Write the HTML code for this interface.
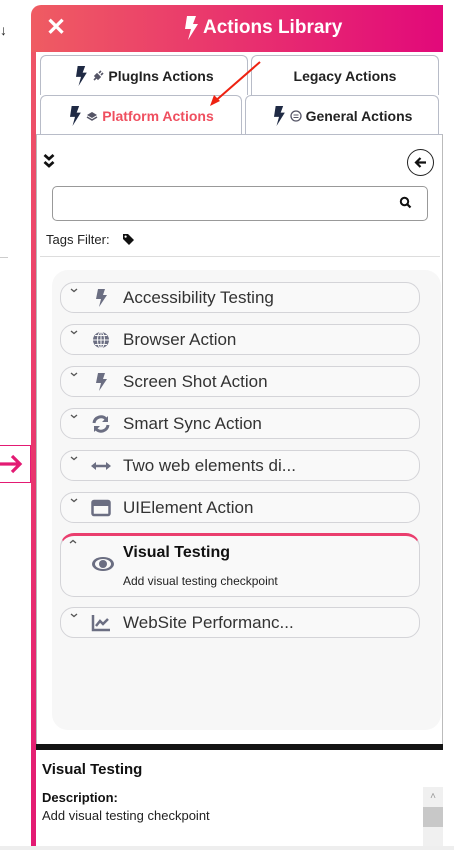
<!DOCTYPE html>
<html><head><style>
*{box-sizing:border-box;margin:0;padding:0}
body{width:454px;height:850px;background:#fff;font-family:"Liberation Sans",sans-serif;position:relative;overflow:hidden;color:#222}
.abs{position:absolute}
.hdr{left:31px;top:5px;width:412px;height:47px;background:linear-gradient(90deg,#ef5c62,#e2097a);border-radius:10px 0 0 0;color:#fff}
.lb{left:31px;top:40px;width:5px;height:806px;background:linear-gradient(180deg,#ee5667,#e31a73)}
.tab{background:#fff;border:1px solid #b8bcc8;border-bottom:none;border-radius:6px 6px 0 0;font-weight:bold;font-size:14px;display:flex;align-items:center;justify-content:center;gap:4px;color:#222}
.bolt{width:14px;height:20px}
.item{position:absolute;left:60px;width:360px;height:31px;border:1px solid #d4d4d8;border-radius:14px;background:#f9f9f9;font-size:17px;color:#333}
.item .ch{position:absolute;left:9px;top:5px}
.item .ic{position:absolute;left:30px;top:6px;width:20px;height:18px}
.item .tx{position:absolute;left:62px;top:5px}
</style></head><body>
<div class="abs" style="left:0;top:22px;font-size:14px">&#8595;</div>
<div class="abs" style="left:0;top:257px;width:8px;height:1px;background:#ccc"></div>
<div class="abs lb"></div>
<div class="abs hdr">
 <div class="abs" style="left:15px;top:8px;font-size:24px;font-weight:bold">✕</div>
 <svg class="abs" style="left:152px;top:11px" width="16" height="24" viewBox="0 0 16 24"><path d="M4 0h9l-3 8h5L5 24l3-11H2z" fill="#fff"/></svg>
 <div class="abs" style="left:172px;top:12px;font-size:19px;font-weight:bold">Actions Library</div>
</div>
<div class="abs" style="left:36px;top:52px;width:407px;height:82px;background:#fff"></div>
<div class="abs tab" style="left:40px;top:55px;width:208px;height:40px"><svg class="bolt" viewBox="0 0 16 24"><path d="M4 0h9l-3 8h5L5 24l3-11H2z" fill="#1f2a44"/></svg><svg width="12" height="12" viewBox="0 0 12 12"><path d="M2 10l3-3M5 4l3 3-2 2-3-3zM7 3l2-2M9 5l2-2" stroke="#556" stroke-width="1.6" fill="#556"/></svg>PlugIns Actions</div>
<div class="abs tab" style="left:251px;top:55px;width:188px;height:40px">Legacy Actions</div>
<div class="abs tab" style="left:40px;top:95px;width:202px;height:40px;color:#ef4f5f"><svg class="bolt" viewBox="0 0 16 24"><path d="M4 0h9l-3 8h5L5 24l3-11H2z" fill="#1f2a44"/></svg><svg width="12" height="12" viewBox="0 0 12 12"><path d="M6 2l5 3-5 3-5-3z" fill="#556"/><path d="M1 7l5 3 5-3" stroke="#556" stroke-width="1.5" fill="none"/></svg>Platform Actions</div>
<div class="abs tab" style="left:245px;top:95px;width:194px;height:40px"><svg class="bolt" viewBox="0 0 16 24"><path d="M4 0h9l-3 8h5L5 24l3-11H2z" fill="#1f2a44"/></svg><svg width="12" height="12" viewBox="0 0 12 12"><circle cx="6" cy="6" r="5" stroke="#556" stroke-width="1.3" fill="none"/><path d="M3.5 5h5M3.5 7.5h5" stroke="#556"/></svg>General Actions</div>
<svg class="abs" style="left:0;top:0" width="454" height="850"><path d="M260 62L213 103" stroke="#e21" stroke-width="2"/><path d="M210 106l4-11 6 6z" fill="#e21"/>
<path d="M428 507L327 556" stroke="#e21" stroke-width="2"/><path d="M320 559l8-10 4 7z" fill="#e21"/></svg>
<div class="abs" style="left:36px;top:134px;width:407px;height:612px;border:1px solid #bbb;border-top:1px solid #b8bcc8;background:#fff"></div>
<svg class="abs" style="left:43px;top:153px" width="12" height="16" viewBox="0 0 12 16"><path d="M1.5 2l4.5 4 4.5-4M1.5 9l4.5 4 4.5-4" stroke="#111" stroke-width="2.8" fill="none"/></svg>
<div class="abs" style="left:407px;top:149px;width:27px;height:27px;border:1.5px solid #222;border-radius:50%"></div>
<svg class="abs" style="left:413px;top:155px" width="15" height="15" viewBox="0 0 15 15"><path d="M13 7.5H3M7.5 3L3 7.5 7.5 12" stroke="#111" stroke-width="2.2" fill="none"/></svg>
<div class="abs" style="left:52px;top:186px;width:376px;height:35px;border:1px solid #999;border-radius:5px"></div>
<svg class="abs" style="left:399px;top:196px" width="13" height="13" viewBox="0 0 13 13"><circle cx="5.5" cy="5.5" r="3.7" stroke="#111" stroke-width="2" fill="none"/><path d="M8 8l3.5 3.5" stroke="#111" stroke-width="2.2"/></svg>
<div class="abs" style="left:46px;top:232px;font-size:13px">Tags Filter:</div>
<svg class="abs" style="left:122px;top:233px" width="13" height="13" viewBox="0 0 13 13"><path d="M1 1h5l6 6-5 5-6-6z" fill="#111"/><circle cx="3.6" cy="3.6" r="1.1" fill="#fff"/></svg>
<div class="abs" style="left:40px;top:256px;width:400px;height:1px;background:#ddd"></div>
<div class="abs" style="left:52px;top:270px;width:389px;height:460px;background:#f7f7f7;border-radius:16px"></div>
<svg width="0" height="0" style="position:absolute"><defs><symbol id="cv" viewBox="0 0 8 5"><path d="M1 1l3 2.5L7 1" stroke="#555" stroke-width="1.3" fill="none"/></symbol></defs></svg>
<div class="item" style="top:282px"><svg class="ch" width="8" height="5"><use href="#cv"/></svg><svg class="ic" viewBox="0 0 20 18"><path d="M7 0h7l-2 6h4L8 18l2-8H5z" fill="#6b6e82"/></svg><span class="tx">Accessibility Testing</span></div>
<div class="item" style="top:324px"><svg class="ch" width="8" height="5"><use href="#cv"/></svg><svg class="ic" viewBox="0 0 20 18"><circle cx="10" cy="9" r="8" fill="#6b6e82"/><path d="M2 9h16M10 1v16M4 4.5h12M4 13.5h12" stroke="#f9f9f9" stroke-width="1"/><ellipse cx="10" cy="9" rx="3.5" ry="8" stroke="#f9f9f9" fill="none"/></svg><span class="tx">Browser Action</span></div>
<div class="item" style="top:366px"><svg class="ch" width="8" height="5"><use href="#cv"/></svg><svg class="ic" viewBox="0 0 20 18"><path d="M7 0h7l-2 6h4L8 18l2-8H5z" fill="#6b6e82"/></svg><span class="tx">Screen Shot Action</span></div>
<div class="item" style="top:408px"><svg class="ch" width="8" height="5"><use href="#cv"/></svg><svg class="ic" viewBox="0 0 20 18"><path d="M3 8a7 7 0 0 1 12-4M17 10a7 7 0 0 1-12 4" stroke="#6b6e82" stroke-width="3" fill="none"/><path d="M17 1v6h-6zM3 17v-6h6z" fill="#6b6e82"/></svg><span class="tx">Smart Sync Action</span></div>
<div class="item" style="top:450px"><svg class="ch" width="8" height="5"><use href="#cv"/></svg><svg class="ic" viewBox="0 0 20 18"><path d="M4 9h12" stroke="#6b6e82" stroke-width="2.5"/><path d="M0 9l5-4v8zM20 9l-5-4v8z" fill="#6b6e82"/></svg><span class="tx">Two web elements di...</span></div>
<div class="item" style="top:492px"><svg class="ch" width="8" height="5"><use href="#cv"/></svg><svg class="ic" viewBox="0 0 20 18"><rect x="1.5" y="2" width="17" height="14" rx="1.5" stroke="#6b6e82" stroke-width="2.5" fill="none"/><path d="M1 5h18" stroke="#6b6e82" stroke-width="4"/></svg><span class="tx">UIElement Action</span></div>
<div class="abs" style="left:60px;top:533px;width:360px;height:64px;border:1px solid #d4d4d8;border-top:3px solid #ea3e6e;border-radius:14px;background:#f9f9f9">
 <svg class="abs" style="left:8px;top:3px" width="8" height="5" viewBox="0 0 8 5"><path d="M1 4l3-2.5L7 4" stroke="#555" stroke-width="1.3" fill="none"/></svg>
 <svg class="abs" style="left:30px;top:20px" width="24" height="16" viewBox="0 0 24 16"><ellipse cx="12" cy="8" rx="11" ry="7" fill="#6b6e82"/><ellipse cx="12" cy="8" rx="8" ry="5" fill="#f9f9f9"/><circle cx="12" cy="8" r="4" fill="#6b6e82"/></svg>
 <div class="abs" style="left:62px;top:8px;font-size:16px;font-weight:bold;color:#111">Visual Testing</div>
 <div class="abs" style="left:62px;top:38px;font-size:12px;color:#222">Add visual testing checkpoint</div>
</div>
<div class="item" style="top:607px"><svg class="ch" width="8" height="5"><use href="#cv"/></svg><svg class="ic" viewBox="0 0 20 18"><path d="M2 1v15h17" stroke="#6b6e82" stroke-width="2.5" fill="none"/><path d="M5 12l4-5 3 3 5-5" stroke="#6b6e82" stroke-width="2.5" fill="none"/></svg><span class="tx">WebSite Performanc...</span></div>
<div class="abs" style="left:36px;top:744px;width:407px;height:6px;background:#141414"></div>
<div class="abs" style="left:42px;top:761px;font-size:15px;font-weight:bold;color:#111">Visual Testing</div>
<div class="abs" style="left:42px;top:790px;font-size:13px;font-weight:bold;color:#111">Description:</div>
<div class="abs" style="left:42px;top:808px;font-size:13px;color:#222">Add visual testing checkpoint</div>
<div class="abs" style="left:423px;top:787px;width:20px;height:59px;background:#f0f0f0"><div style="height:20px;text-align:center;font-size:10px;color:#999;line-height:20px">˄</div><div style="height:20px;background:#c8c8c8"></div></div>
<div class="abs" style="left:0;top:846px;width:454px;height:4px;background:#eee"></div>
<div class="abs" style="left:0;top:445px;width:31px;height:38px;border:1px solid #e31a73;border-left:none;background:#fff"></div>
<svg class="abs" style="left:0;top:453px" width="24" height="22" viewBox="0 0 24 22"><path d="M0 11h20M12 3l8 8-8 8" stroke="#e31a73" stroke-width="3.2" fill="none"/></svg>
</body></html>
